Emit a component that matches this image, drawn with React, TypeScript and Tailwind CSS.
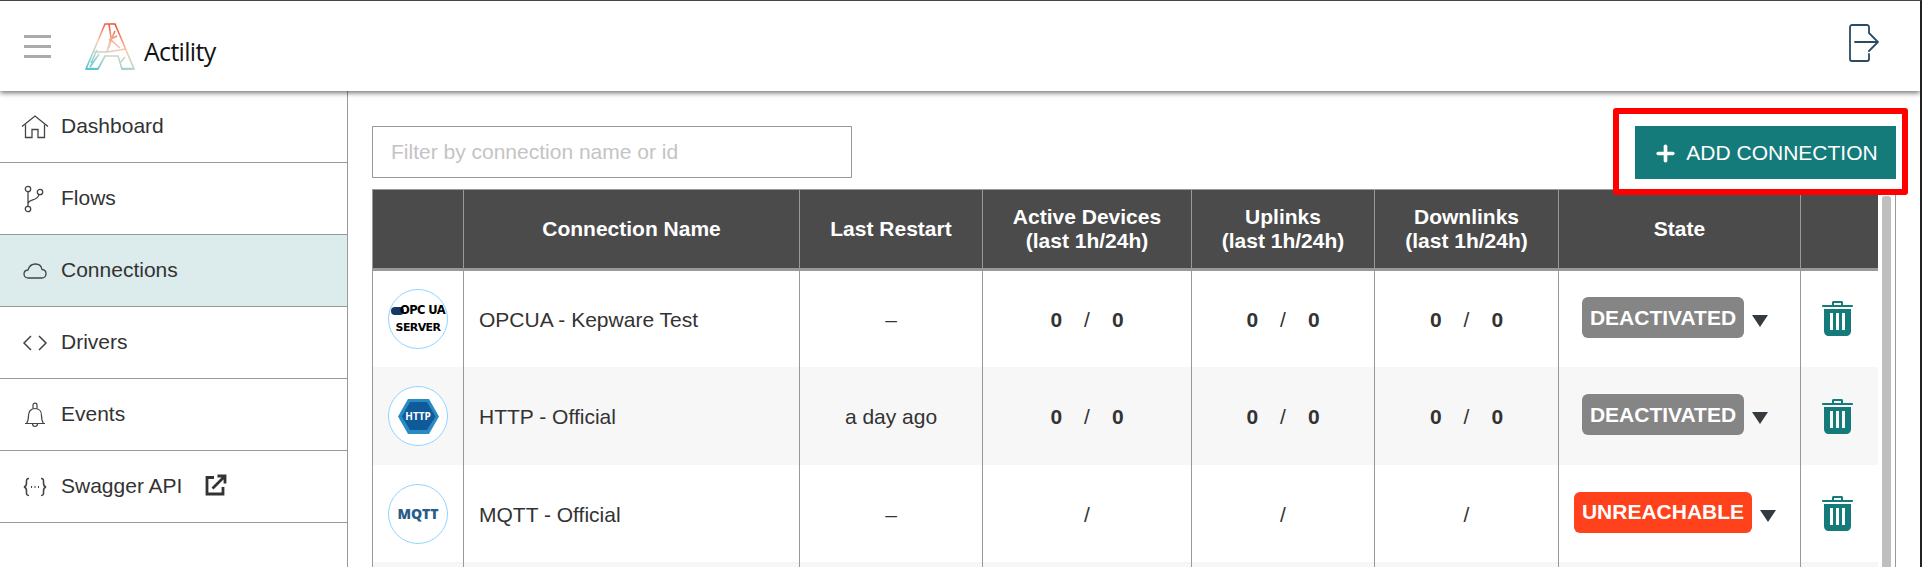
import { Plus } from "lucide-react";

const font = { fontFamily: '"Liberation Sans", Arial, sans-serif' };

const HomeIcon = () => (
  <svg width="28" height="24" viewBox="0 0 28 24" fill="none" stroke="#444" strokeWidth="1.3">
    <path d="M1 11.5 14 1l13 10.5" />
    <path d="M4.5 9.5V22.5H11V14.5H17V22.5H23.5V9.5" />
  </svg>
);
const BranchIcon = () => (
  <svg width="22" height="28" viewBox="0 0 22 28" fill="none" stroke="#444" strokeWidth="1.3">
    <circle cx="4" cy="4" r="2.7" />
    <circle cx="4" cy="24" r="2.7" />
    <circle cx="16" cy="7" r="2.7" />
    <path d="M4 7v14M4 19c0-5 10-3 11-9.5" />
  </svg>
);
const CloudIcon = () => (
  <svg width="24" height="16" viewBox="0 0 24 16" fill="none" stroke="#444" strokeWidth="1.3">
    <path d="M5.5 15C2.5 15 1 13 1 11c0-2.3 1.7-3.8 4-4C6 3.5 9 1 12.5 1c3.7 0 6 2.5 6.5 5.500 2.500.2 4 2 4 4.200 0 2.300-1.700 4.300-4.300 4.300z" />
  </svg>
);
const CodeIcon = () => (
  <svg width="26" height="18" viewBox="0 0 26 18" fill="none" stroke="#444" strokeWidth="1.5">
    <path d="M9 2 2 9l7 7M17 2l7 7-7 7" />
  </svg>
);
const BellIcon = () => (
  <svg width="22" height="26" viewBox="0 0 22 26" fill="none" stroke="#444" strokeWidth="1.2">
    <path d="M1 21.500h20M2.500 21.500c1.500-2 2-3.500 2-8 0-4 2.500-7 6.500-7s6.500 3 6.500 7c0 4.500.5 6 2 8" />
    <path d="M9 6.500V3c0-2.500 4-2.500 4 0v3.500M8.500 21.500c0 4 5 4 5 0" />
  </svg>
);
const BracesIcon = () => (
  <svg width="24" height="20" viewBox="0 0 24 20" fill="none" stroke="#444" strokeWidth="1.6">
    <path d="M6 1.500C3 1.500 3.500 3.500 3.500 6c0 2.500-.5 3.500-2.500 4 2 .5 2.500 1.500 2.500 4s-.5 4.500 2.500 4.500" />
    <path d="M18 1.500c3 0 2.500 2 2.500 4.500 0 2.500.5 3.500 2.500 4-2 .5-2.500 1.500-2.500 4s.5 4.500-2.500 4.500" />
    <path d="M8 10h1M11.500 10h1M15 10h1" strokeWidth="1.8" />
  </svg>
);
const ExternalIcon = () => (
  <svg width="22" height="22" viewBox="0 0 22 22" fill="none" stroke="#333" strokeWidth="2.8">
    <path d="M9 3.500H2V20h16v-7" />
    <path d="M7.500 14.500 19 3M12.500 2H20v7.500" />
  </svg>
);
const LogoutIcon = () => (
  <svg width="30" height="38" viewBox="0 0 30 38" fill="none" stroke="#2b4a63" strokeWidth="1.8" strokeLinecap="round">
    <path d="M20 8V3c0-1-1-2-2-2H3C2 1 1 2 1 3v32c0 1 1 2 2 2h15c1 0 2-1 2-2v-5" />
    <path d="M6 18h23M20 9l9 9-9 9" />
  </svg>
);
const TrashIcon = () => (
  <svg width="31" height="35" viewBox="0 0 31 35" fill="#147b7a">
    <path d="M10 4V1.500C10 .7 10.700 0 11.500 0h8c.8 0 1.500.7 1.500 1.500V4h9c.6 0 1 .4 1 1s-.4 1-1 1H1C.4 6 0 5.600 0 5s.4-1 1-1zm2-2v2h7V2z" />
    <path fillRule="evenodd" d="M2 8h27v22c0 3-2 5-5 5H7c-3 0-5-2-5-5zm6 4v17h3V12zm6 0v17h3V12zm6 0v17h3V12z" />
  </svg>
);

const ActilityLogo = () => (
  <svg width="50" height="47" viewBox="0 0 50 47" fill="none" strokeWidth="1.600">
    <defs>
      <linearGradient id="actGrad" x1="30" y1="0" x2="12" y2="47" gradientUnits="userSpaceOnUse">
        <stop offset="0" stopColor="#f0442c" />
        <stop offset="0.45" stopColor="#f8c9ae" />
        <stop offset="0.7" stopColor="#b9d8cf" />
        <stop offset="1" stopColor="#5cc4cf" />
      </linearGradient>
    </defs>
    <g stroke="url(#actGrad)">
      <path d="M20 1 1 46h12l7-13h13l4 13h12L30 1z" />
      <path d="M24 1l2 14-4 14M30 8l-4 9 -2 8M24 17l8-4M8 29h14l19-3M12 27l-6 13M40 34l-5 6M14 31 5 44M26 17l9 8" />
      <path d="M1 46h12M37 46h12" strokeWidth="2.500" />
    </g>
  </svg>
);

const OpcBadge = () => (
  <div className="flex flex-col items-center text-black font-bold leading-none tracking-[-0.6px] whitespace-nowrap" style={{ fontFamily: '"DejaVu Sans", sans-serif' }}>
    <div className="flex items-center text-[11.5px]">
      <span className="w-[13px] h-[8px] bg-[#17375e] rounded-full mr-[-4px]" />
      <span>OPC UA</span>
    </div>
    <span className="text-[11px] mt-[5px]">SERVER</span>
  </div>
);

const HttpBadge = () => (
  <div className="relative flex items-center justify-center">
    <svg width="41" height="35" viewBox="0 0 41 35">
      <path d="M10 0h21l10 17.500L31 35H10L0 17.500z" fill="#2a8ac4" />
      <path d="M12 3h17l8.500 14.500L29 31H12L4 17.500z" fill="#0f5a99" />
    </svg>
    <span className="absolute text-white text-[10px] font-bold" style={{ fontFamily: '"Open Sans", sans-serif' }}>HTTP</span>
  </div>
);

const MqttBadge = () => (
  <span className="text-[#2a5c8a] text-[14px] font-extrabold" style={{ fontFamily: '"Open Sans", sans-serif' }}>MQTT</span>
);

const navItems = [
  { label: "Dashboard", icon: <HomeIcon /> },
  { label: "Flows", icon: <BranchIcon /> },
  { label: "Connections", icon: <CloudIcon />, active: true },
  { label: "Drivers", icon: <CodeIcon /> },
  { label: "Events", icon: <BellIcon /> },
  { label: "Swagger API", icon: <BracesIcon />, external: true },
];

const rows = [
  { name: "OPCUA - Kepware Test", logo: <OpcBadge />, restart: "–", counts: true, state: "DEACTIVATED", h: "h-[98px]" },
  { name: "HTTP - Official", logo: <HttpBadge />, restart: "a day ago", counts: true, state: "DEACTIVATED", h: "h-[98px]", stripe: true },
  { name: "MQTT - Official", logo: <MqttBadge />, restart: "–", counts: false, state: "UNREACHABLE", h: "h-[97px]" },
];

const Counts = ({ show }: { show: boolean }) =>
  show ? (
    <div className="flex justify-center items-center gap-[22px] text-[#333]">
      <span className="font-bold">0</span>
      <span>/</span>
      <span className="font-bold">0</span>
    </div>
  ) : (
    <span className="text-[#333]">/</span>
  );

const th = "border-r border-[#999] font-bold text-center align-middle leading-[24px]";
const td = "border-r border-[#999] text-center align-middle";

export default function App() {
  return (
    <div className="w-[1922px] h-[567px] overflow-hidden bg-white border-t border-[#444] border-r-2 border-r-[#222] flex flex-col text-[21px] text-[#333]" style={font}>
      {/* Header */}
      <header className="relative z-10 h-[90px] shrink-0 bg-white flex items-center justify-between shadow-[0_2px_5px_rgba(0,0,0,0.55)]">
        <div className="flex items-center">
          <div className="ml-[24px] w-[27px] flex flex-col gap-[7px]">
            <span className="h-[3px] bg-[#aaa]" />
            <span className="h-[3px] bg-[#aaa]" />
            <span className="h-[3px] bg-[#aaa]" />
          </div>
          <div className="ml-[34px]">
            <ActilityLogo />
          </div>
          <span className="ml-[9px] mt-[11px] text-[25px] text-[#111] tracking-[-0.7px]" style={{ fontFamily: '"Open Sans", sans-serif' }}>
            Actility
          </span>
        </div>
        <div className="mr-[41px] mt-[-7px]">
          <LogoutIcon />
        </div>
      </header>

      <div className="flex flex-1 min-h-0">
        {/* Sidebar */}
        <aside className="w-[348px] shrink-0 border-r border-[#999]">
          {navItems.map(item => (
            <div
              key={item.label}
              className={`h-[72px] border-b border-[#999] flex items-center ${item.active ? "bg-[#dcebeb]" : ""}`}
            >
              <div className="w-[61px] pl-[21px] pr-[12px] flex justify-center shrink-0">{item.icon}</div>
              <span className="mt-[-2px]">{item.label}</span>
              {item.external && (
                <span className="ml-[23px] mt-[-3px]">
                  <ExternalIcon />
                </span>
              )}
            </div>
          ))}
        </aside>

        {/* Content */}
        <main className="flex-1 min-w-0 pl-[24px] pr-[24px] pt-[35px]">
          <div className="h-[52px] mb-[11px] flex justify-between items-start">
            <input
              placeholder="Filter by connection name or id"
              className="w-[480px] h-[52px] border border-[#999] px-[18px] text-[21px] outline-none placeholder:text-[#c4c4c4]"
            />
            <div className="relative">
              <button className="w-[261px] h-[53px] pt-[1px] bg-[#147b7a] text-white text-[21px] flex items-center justify-center gap-[8px]">
                <Plus size={25} strokeWidth={3.5} />
                ADD CONNECTION
              </button>
              <div className="absolute left-[-22px] right-[-12px] top-[-18px] bottom-[-16px] border-[6px] border-[#ff0000] rounded-[3px] pointer-events-none" />
            </div>
          </div>

          <div className="flex border-t border-[#999] border-r h-[400px]">
            <table className="w-[1505px] shrink-0 table-fixed border-collapse border-l border-[#999] self-start">
              <colgroup>
                <col className="w-[91px]" />
                <col className="w-[336px]" />
                <col className="w-[183px]" />
                <col className="w-[209px]" />
                <col className="w-[183px]" />
                <col className="w-[184px]" />
                <col className="w-[242px]" />
                <col className="w-[77px]" />
              </colgroup>
              <thead>
                <tr className="h-[79px] bg-[#4b4b4b] text-white border-b-[3px] border-[#999]">
                  <th className={th}></th>
                  <th className={th}>Connection Name</th>
                  <th className={th}>Last Restart</th>
                  <th className={th}>Active Devices<br />(last 1h/24h)</th>
                  <th className={th}>Uplinks<br />(last 1h/24h)</th>
                  <th className={th}>Downlinks<br />(last 1h/24h)</th>
                  <th className={th}>State</th>
                  <th></th>
                </tr>
              </thead>
              <tbody>
                {rows.map(row => (
                  <tr key={row.name} className={`${row.h} ${row.stripe ? "bg-[#f7f7f7]" : ""}`}>
                    <td className={td}>
                      <div className="mx-auto w-[60px] h-[60px] rounded-full bg-white border border-[#90d5ff] flex items-center justify-center overflow-hidden">
                        {row.logo}
                      </div>
                    </td>
                    <td className={`${td} text-left pl-[15px] pt-[2px]`}>{row.name}</td>
                    <td className={`${td} pt-[2px]`}>{row.restart}</td>
                    <td className={`${td} pt-[2px]`}><Counts show={row.counts} /></td>
                    <td className={`${td} pt-[2px]`}><Counts show={row.counts} /></td>
                    <td className={`${td} pt-[2px]`}><Counts show={row.counts} /></td>
                    <td className={td}>
                      <div className="flex justify-center items-center gap-[8px] mr-[9px]">
                        <span
                          className={`h-[41px] rounded-[6px] text-white font-bold px-[8px] flex items-center mt-[-3px] ${
                            row.state === "UNREACHABLE" ? "bg-[#ff411c]" : "bg-[#858585]"
                          }`}
                        >
                          {row.state}
                        </span>
                        <span className="w-0 h-0 mt-[4px] border-x-[8.5px] border-x-transparent border-t-[12px] border-t-[#333a40]" />
                      </div>
                    </td>
                    <td className="text-center align-middle">
                      <div className="flex justify-center mr-[3px]">
                        <TrashIcon />
                      </div>
                    </td>
                  </tr>
                ))}
                <tr className="h-[60px] bg-[#f7f7f7]">
                  <td className={td}></td>
                  <td className={td}></td>
                  <td className={td}></td>
                  <td className={td}></td>
                  <td className={td}></td>
                  <td className={td}></td>
                  <td className={td}></td>
                  <td></td>
                </tr>
              </tbody>
            </table>
            {/* Scrollbar */}
            <div className="flex-1 pl-[4px] pr-[4px] pt-[6px]">
              <div className="h-full bg-[#bfbfbf] rounded-t-[3px]" />
            </div>
          </div>
        </main>
      </div>
    </div>
  );
}
